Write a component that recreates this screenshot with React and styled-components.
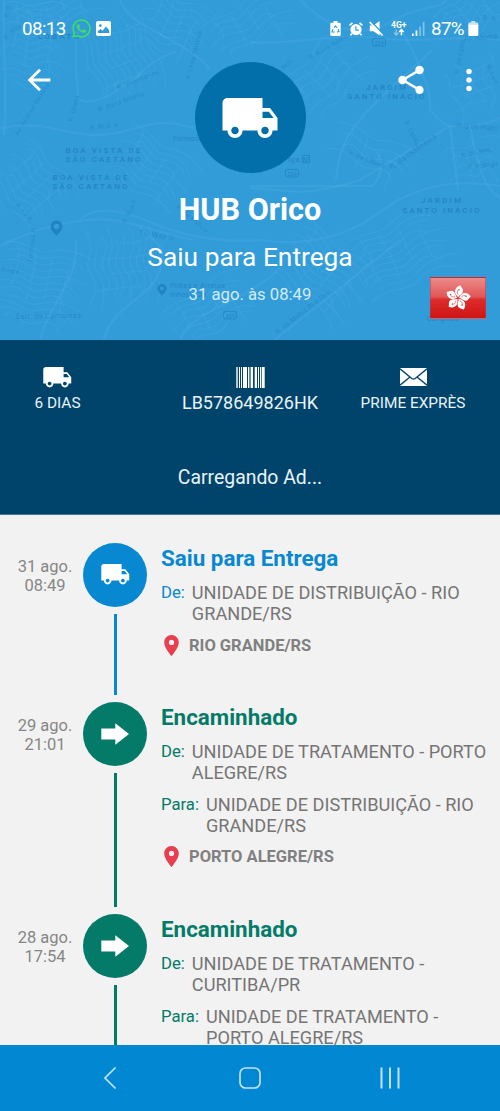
import React from "react";
import styled, { createGlobalStyle } from "styled-components";
import {
	MdArrowBack,
	MdShare,
	MdMoreVert,
	MdLocalShipping,
	MdPlace,
} from "react-icons/md";
import { FaWhatsapp } from "react-icons/fa";

const GlobalStyle = createGlobalStyle`
	* {
		box-sizing: border-box;
	}

	body {
		margin: 0;
		font-family: Roboto, "Liberation Sans", sans-serif;
	}

	svg {
		display: block;
		flex-shrink: 0;
	}
`;

const Screen = styled.div`
	width: 500px;
	height: 1111px;
	display: flex;
	flex-direction: column;
	overflow: hidden;
	background: #f2f2f2;
`;

//header

const Header = styled.header`
	position: relative;
	height: 340px;
	flex-shrink: 0;
	overflow: hidden;
	background: #329cd9;
	color: #fff;
`;

const MapLayer = styled.svg`
	position: absolute;
	top: 0;
	left: 0;
`;

const HeaderContent = styled.div`
	position: relative;
	display: flex;
	flex-direction: column;
`;

const StatusBar = styled.div`
	display: flex;
	justify-content: space-between;
	height: 57px;
	padding: 0 21px 0 22px;
`;

const StatusGroup = styled.div`
	display: flex;
	align-items: center;
	height: 57px;
`;

const StatusText = styled.span`
	font-size: 18.8px;
	line-height: 22px;
	letter-spacing: -0.6px;
	white-space: nowrap;
`;

const StatusIcon = styled.span`
	margin-left: ${({ $gap }) => $gap};
`;

const Toolbar = styled.div`
	display: grid;
	grid-template-columns: 1fr 111px 1fr;
	height: 111px;
	margin-top: 5px;
`;

const ToolbarGroup = styled.div`
	display: flex;
	gap: 24px;
	height: 35px;
	align-items: center;
	padding: 0 14px 0 22px;
	justify-content: ${({ $end }) => ($end ? "flex-end" : "flex-start")};
`;

const HeroCircle = styled.div`
	width: 111px;
	height: 111px;
	border-radius: 50%;
	background: #026faa;
	display: flex;
	align-items: center;
	justify-content: center;
`;

const HeroText = styled.div`
	display: flex;
	flex-direction: column;
	align-items: center;
	padding-top: 18px;
`;

const HeroTitle = styled.h1`
	margin: 0;
	font-size: 30.6px;
	font-weight: 700;
	line-height: 37px;
`;

const HeroStatus = styled.div`
	margin-top: 13px;
	font-size: 26.3px;
	line-height: 32px;
`;

const HeroDate = styled.div`
	margin-top: 12px;
	font-size: 16.7px;
	line-height: 20px;
	color: #d3ebf8;
`;

const Flag = styled.div`
	position: absolute;
	right: 14px;
	bottom: 21px;
	width: 56px;
	height: 42px;
	border: 1px solid rgba(190, 60, 80, 0.5);
	background: linear-gradient(#ec8b8b 0%, #e15656 47%, #dc2c2c 54%, #d01414 100%);
	display: flex;
	align-items: center;
	justify-content: center;
`;

//info panel

const InfoPanel = styled.section`
	height: 175px;
	flex-shrink: 0;
	background: #00446b;
	border-bottom: 1px solid #4b7591;
	color: #e9f3f9;
	display: flex;
	flex-direction: column;
	align-items: center;
`;

const InfoRow = styled.div`
	width: 100%;
	display: grid;
	grid-template-columns: 174px 152px 174px;
	padding-top: 22px;
`;

const InfoItem = styled.div`
	display: flex;
	flex-direction: column;
	align-items: center;
	padding-right: ${({ $inset }) => $inset || "0"};
	font-size: ${({ $size }) => $size || "15.4px"};
	line-height: 22px;
	white-space: nowrap;
`;

const InfoIcon = styled.span`
	height: 30px;
	display: flex;
	align-items: center;
	color: #fff;
`;

const AdText = styled.div`
	margin-top: 52px;
	font-size: 19.4px;
	line-height: 24px;
`;

//timeline

const Timeline = styled.main`
	flex: 1;
	min-height: 0;
	overflow: hidden;
	padding-top: 27.5px;
`;

const Event = styled.article`
	display: grid;
	grid-template-columns: 83px 64px 1fr;
	height: ${({ $height }) => $height};
`;

const EventDate = styled.div`
	padding: 14px 0 0 7px;
	font-size: 16.5px;
	line-height: 19.3px;
	text-align: center;
	color: #868686;
`;

const Rail = styled.div`
	display: flex;
	flex-direction: column;
	align-items: center;
	padding-bottom: 7px;
`;

const RailCircle = styled.div`
	width: 64px;
	height: 64px;
	flex-shrink: 0;
	border-radius: 50%;
	background: ${({ $color }) => $color};
	color: #fff;
	display: flex;
	align-items: center;
	justify-content: center;
`;

const RailLine = styled.div`
	flex: 1;
	width: 3px;
	margin-top: 7px;
	background: ${({ $color }) => $color};
`;

const EventBody = styled.div`
	padding: 1px 10px 0 14px;
`;

const EventTitle = styled.h2`
	margin: 0 0 10.5px;
	font-size: 22.4px;
	font-weight: 700;
	line-height: 28px;
	color: ${({ $color }) => $color};
`;

const Route = styled.div`
	display: flex;
	gap: 7px;
	margin-bottom: 10px;
	font-size: 18.15px;
	line-height: 21.3px;
	color: #757575;
`;

const RouteLabel = styled.span`
	font-size: 16.7px;
	color: ${({ $color }) => $color};
`;

const Place = styled.div`
	display: flex;
	align-items: center;
	gap: 5px;
	height: 21px;
	margin-left: -2px;
	font-size: 16.5px;
	font-weight: 700;
	color: #808080;
`;

//system navigation

const NavBar = styled.nav`
	height: 66px;
	flex-shrink: 0;
	background: #0288d3;
	display: grid;
	grid-template-columns: repeat(3, 140px);
	justify-content: center;
	align-items: center;
	justify-items: center;
`;

const BLUE = "#0788d1";
const GREEN = "#047b68";

const events = [
	{
		date: "31 ago.",
		time: "08:49",
		title: "Saiu para Entrega",
		color: BLUE,
		icon: "truck",
		height: "159px",
		routes: [["De:", "UNIDADE DE DISTRIBUIÇÃO - RIO GRANDE/RS"]],
		place: "RIO GRANDE/RS",
	},
	{
		date: "29 ago.",
		time: "21:01",
		title: "Encaminhado",
		color: GREEN,
		icon: "arrow",
		height: "212px",
		routes: [
			["De:", "UNIDADE DE TRATAMENTO - PORTO ALEGRE/RS"],
			["Para:", "UNIDADE DE DISTRIBUIÇÃO - RIO GRANDE/RS"],
		],
		place: "PORTO ALEGRE/RS",
	},
	{
		date: "28 ago.",
		time: "17:54",
		title: "Encaminhado",
		color: GREEN,
		icon: "arrow",
		height: "212px",
		routes: [
			["De:", "UNIDADE DE TRATAMENTO - CURITIBA/PR"],
			["Para:", "UNIDADE DE TRATAMENTO - PORTO ALEGRE/RS"],
		],
	},
];

const mainRoads = [
	"M0 128C50 118 70 140 110 134S150 116 194 128",
	"M4 0C2 40 8 90 4 136",
	"M78 30C74 50 76 70 78 98Q84 106 108 96L136 78Q150 60 176 52",
	"M500 40C450 34 420 44 380 38S290 46 250 42",
	"M395 20C420 60 432 92 430 110Q444 126 450 126L458 190",
	"M450 126L360 180Q330 190 300 192L250 188",
	"M450 126Q480 128 500 118",
	"M336 180C340 140 350 130 378 100L432 50",
	"M0 246C30 232 50 224 88 220S150 232 194 240",
	"M80 220Q100 200 150 222T260 240Q330 250 380 212T500 186",
	"M250 186H372Q388 170 376 150",
	"M40 340C50 300 80 280 76 240",
	"M104 340C110 306 150 300 160 270S146 240 140 226",
	"M180 340C190 310 250 300 280 268",
	"M274 340Q300 320 330 296T400 240",
	"M470 126C478 170 486 190 500 198",
	"M300 0C330 30 360 40 390 22S440 10 446 0",
	"M120 0C130 30 190 40 210 70",
];

// blocks of winding side streets: centre, size, rotation, number of streets
const districts = [
	{ x: 118, y: 60, w: 84, h: 70, a: 70, n: 11 },
	{ x: 34, y: 50, w: 64, h: 90, a: 4, n: 12 },
	{ x: 60, y: 14, w: 90, h: 34, a: -20, n: 5 },
	{ x: 172, y: 30, w: 70, h: 60, a: 24, n: 8 },
	{ x: 250, y: 26, w: 90, h: 44, a: -30, n: 6 },
	{ x: 474, y: 16, w: 66, h: 46, a: -38, n: 6 },
	{ x: 330, y: 80, w: 90, h: 60, a: -44, n: 6 },
	{ x: 150, y: 172, w: 84, h: 60, a: 34, n: 9 },
	{ x: 28, y: 190, w: 76, h: 70, a: 48, n: 9 },
	{ x: 40, y: 290, w: 90, h: 80, a: 12, n: 12 },
	{ x: 118, y: 268, w: 80, h: 70, a: 84, n: 10 },
	{ x: 214, y: 312, w: 90, h: 50, a: -30, n: 7 },
	{ x: 320, y: 276, w: 100, h: 70, a: 40, n: 10 },
	{ x: 404, y: 256, w: 100, h: 70, a: -26, n: 10 },
	{ x: 470, y: 90, w: 60, h: 60, a: 70, n: 5 },
	{ x: 372, y: 158, w: 90, h: 40, a: 24, n: 4 },
	{ x: 476, y: 164, w: 60, h: 40, a: -16, n: 4 },
];

const streetNames = [
	{ x: 18, y: 136, a: -58, t: "Av. Afrânio Peixoto" },
	{ x: 118, y: 90, a: -22, t: "R. Voluntários" },
	{ x: 99, y: 112, a: -20, t: "R. Dona Amélia" },
	{ x: 90, y: 130, a: -6, t: "R. Rod. A." },
	{ x: 72, y: 122, a: -74, t: "R. Direta" },
	{ x: 190, y: 80, a: -76, t: "R. Lima Teixeira" },
	{ x: 6, y: 40, a: -42, t: "R. Rua" },
	{ x: 8, y: 18, a: -70, t: "R. S." },
	{ x: 15, y: 206, a: 45, t: "R. Luiz" },
	{ x: 126, y: 224, a: -64, t: "R. Rua F." },
	{ x: 139, y: 235, a: 8, t: "Tv. Way G.", big: 1 },
	{ x: 176, y: 208, a: 40, t: "R. da Bolívia" },
	{ x: 32, y: 262, a: -84, t: "Formosa R." },
	{ x: 1, y: 272, a: 4, t: "Pirajá" },
	{ x: 16, y: 319, a: -1, t: "Estr. de Campinas", big: 1 },
	{ x: 278, y: 334, a: -38, t: "R. da Matriz Boa Esp." },
	{ x: 404, y: 122, a: 64, t: "R. Celika" },
	{ x: 392, y: 170, a: -36, t: "R. da Indonésia", big: 1 },
	{ x: 456, y: 128, a: 4, t: "Rua do Prato", big: 1, w: 42 },
	{ x: 462, y: 158, a: -14, t: "R. da Reg.", w: 32 },
	{ x: 468, y: 169, a: -6, t: "R. Rodrigo", w: 30 },
	{ x: 348, y: 154, a: 22, t: "R. da Líbano" },
	{ x: 464, y: 41, a: -4, t: "Av. Alioma", w: 34, big: 1 },
	{ x: 459, y: 74, a: -80, t: "R. do Egito" },
	{ x: 486, y: 66, a: 62, t: "R. Luís" },
	{ x: 310, y: 60, a: -30, t: "R. Nova Roma" },
	{ x: 284, y: 70, a: -46, t: "Nilo" },
	{ x: 483, y: 20, a: 0, t: "R. d" },
];

const street = (w, y, i) =>
	`M${-w / 2 + (i % 3) * 7} ${y}C${-w / 4} ${y - 7 - (i % 4) * 2} ${-w / 8} ${y + 6} 0 ${
		y + 1
	}S${w / 4} ${y - 8} ${w / 2 - (i % 4) * 6} ${y + (i % 2) * 5}`;

const Map = () => (
	<MapLayer width="500" height="340" viewBox="0 0 500 340">
		<g fill="none" stroke="#58b4e8" strokeOpacity="0.24">
			{mainRoads.map((d) => (
				<path key={d} d={d} strokeWidth="2.2" />
			))}
			{districts.map(({ x, y, w, h, a, n }) => (
				<g key={`${x}-${y}`} transform={`translate(${x} ${y}) rotate(${a})`} strokeWidth="1">
					{Array.from({ length: n }, (_, i) => (
						<path key={i} d={street(w, -h / 2 + (h * i) / n, i)} />
					))}
					{Array.from({ length: 4 }, (_, i) => (
						<path
							key={i}
							d={`M${-w / 3 + (i * w) / 5} ${-h / 2 + i * 4}q${6 - i * 3} ${h / 4} 0 ${
								h / 2 + (i % 2) * 12
							}`}
						/>
					))}
				</g>
			))}
		</g>
		<g fill="#0b5f9e" fillOpacity="0.32" fontFamily="Roboto">
			{streetNames.map(({ x, y, a, t, big, w }) => (
				<text
					key={t}
					transform={`translate(${x} ${y}) rotate(${a})`}
					fontSize={big ? 7.5 : 6.5}
					letterSpacing="0.3"
					textLength={w}
				>
					{t}
				</text>
			))}
		</g>
		<g
			fill="#0b5f9e"
			fillOpacity="0.42"
			fontFamily="Roboto"
			fontSize="8"
			fontWeight="500"
			lengthAdjust="spacing"
		>
			<text x="38" y="39" textLength="41">LOBATO</text>
			<text x="65.500" y="152.500" textLength="75">BOA VISTA DE</text>
			<text x="65.500" y="161.500" textLength="75">SÃO CAETANO</text>
			<text x="52.500" y="180" textLength="75">BOA VISTA DE</text>
			<text x="52.500" y="189" textLength="75">SÃO CAETANO</text>
			<text x="366" y="89.500" textLength="40">JARDIM</text>
			<text x="347.500" y="98.500" textLength="77">SANTO INÁCIO</text>
			<text x="421" y="203" textLength="40">JARDIM</text>
			<text x="402.500" y="212.500" textLength="77">SANTO INÁCIO</text>
		</g>
		<g fill="#0b5f9e" fillOpacity="0.4" fontFamily="Roboto" fontSize="7">
			<text x="173" y="141" fontSize="7.500">Formosa</text>
			<text x="170" y="288" textLength="55">Pilões e Arreios</text>
			<text x="170" y="297">linhos e Cia</text>
			<text x="288" y="162">nça</text>
			<text x="303" y="161.500" fontSize="6.500">M</text>
			<text x="427" y="321">Campinas</text>
			<text x="374.500" y="44.500" fontSize="5.500">324</text>
			<text x="287.500" y="175.500" fontSize="5.500">324</text>
			<text x="225.500" y="317.500" fontSize="5.500">324</text>
			<path d="M56.500 220.500a6 6 0 0 0-6 6c0 4 6 9 6 9s6-5 6-9a6 6 0 0 0-6-6zm0 3.400a2.700 2.700 0 1 1 0 5.400 2.700 2.700 0 0 1 0-5.400z" fillRule="evenodd" />
			<path d="M162 284a4.600 4.600 0 0 0-4.600 4.600c0 3 4.600 7 4.600 7s4.600-4 4.600-7A4.600 4.600 0 0 0 162 284zm0 2.500a2 2 0 1 1 0 4 2 2 0 0 1 0-4z" fillRule="evenodd" />
		</g>
		<g fill="none" stroke="#0b5f9e" strokeOpacity="0.3">
			<rect x="372.500" y="38.500" width="13" height="7.500" rx="2" />
			<rect x="302.500" y="155.500" width="7" height="7" />
			<rect x="285.500" y="169.500" width="13" height="7.500" rx="2" />
			<rect x="223.500" y="311.500" width="13" height="7.500" rx="2" />
		</g>
	</MapLayer>
);

const ImageIcon = () => (
	<svg width="15" height="15" viewBox="0 0 15 15">
		<rect width="15" height="15" rx="1.800" fill="#fff" />
		<circle cx="4.300" cy="4.600" r="1.400" fill="#329cd9" />
		<path d="M1.800 12V10l2.800-2 2 1.700L10 5.500l3.200 3.800V12z" fill="#329cd9" />
	</svg>
);

const RecycleBatteryIcon = () => (
	<svg width="11" height="15" viewBox="0 0 11 15">
		<path d="M3.500 0h4v1.700H9.500A1.200 1.200 0 0 1 10.700 3v10.700A1.200 1.200 0 0 1 9.500 15h-8A1.200 1.200 0 0 1 .3 13.700V3a1.200 1.200 0 0 1 1.200-1.300h2z" fill="#fff" />
		<path d="M4 6.800L5.500 4.900 7 6.800M8 8l1 2.500-2 .6M4.600 11.100L2 10.700 3 8.200" fill="none" stroke="#329cd9" strokeWidth="1.100" />
	</svg>
);

const AlarmIcon = () => (
	<svg width="14" height="14" viewBox="0 0 14 14">
		<circle cx="7" cy="7.600" r="5.600" fill="#fff" />
		<path d="M.6 3.400L3.500.8M13.400 3.400L10.500.8M2.800 11.600L1.500 13.200M11.200 11.600l1.300 1.600" stroke="#fff" strokeWidth="1.700" />
		<path d="M6.900 4.300v3.800h2.900" fill="none" stroke="#329cd9" strokeWidth="1.200" />
	</svg>
);

const MuteIcon = () => (
	<svg width="15" height="15" viewBox="0 0 15 15">
		<path d="M.8 4.600h3.700L10.600 0v14.500L4.500 10.200H.8z" fill="#fff" />
		<path d="M1.900.2l13 13.500" stroke="#329cd9" strokeWidth="1.300" />
		<path d="M.6 1l13 13.500" stroke="#fff" strokeWidth="1.600" />
	</svg>
);

const NetworkIcon = () => (
	<svg width="16" height="15" viewBox="0 0 16 15">
		<text x="0" y="7" fill="#fff" fontFamily="Roboto" fontSize="8.800" fontWeight="700" textLength="15.500" lengthAdjust="spacingAndGlyphs">
			4G+
		</text>
		<path d="M5.200 8.300v5.400M2.900 11.600l2.300 2.500 2.300-2.500" fill="none" stroke="#8fcaed" strokeWidth="1.200" />
		<path d="M10.400 14.300V9M8.100 11.100l2.300-2.400 2.300 2.400" fill="none" stroke="#fff" strokeWidth="1.500" />
	</svg>
);

const SignalIcon = () => (
	<svg width="13" height="14" viewBox="0 0 13 14">
		<rect x="0" y="11.500" width="1.700" height="2.500" fill="#fff" />
		<rect x="3.600" y="8.500" width="1.700" height="5.500" fill="#fff" />
		<rect x="7.200" y="4.500" width="1.700" height="9.500" fill="#7fc3ea" />
		<rect x="10.800" y="0" width="1.700" height="14" fill="#7fc3ea" />
	</svg>
);

const BatteryIcon = () => (
	<svg width="11" height="15" viewBox="0 0 11 15">
		<path d="M3.200 0h4v1.500H9A1.200 1.200 0 0 1 10.300 2.700V5H.3V2.700A1.200 1.200 0 0 1 1.500 1.500h1.700z" fill="#c4e3f6" />
		<path d="M.3 3.800h10v10A1.200 1.200 0 0 1 9 15H1.500A1.200 1.200 0 0 1 .3 13.800z" fill="#fff" />
	</svg>
);

const BarcodeIcon = () => (
	<svg width="29" height="21" viewBox="0 0 29 21" fill="#fff">
		<rect x="0.300" width="1.400" height="21" />
		<rect x="3" width="1" height="21" />
		<rect x="5" width="1" height="21" />
		<rect x="7" width="4" height="21" />
		<rect x="12" width="1.400" height="21" />
		<rect x="14.600" width="2.400" height="21" />
		<rect x="18.700" width="2.300" height="21" />
		<rect x="22" width="1" height="21" />
		<rect x="24" width="1" height="21" />
		<rect x="25.700" width="3" height="21" />
	</svg>
);

const MailIcon = () => (
	<svg width="27" height="18" viewBox="0 0 27 18">
		<rect width="27" height="18" fill="#fff" />
		<path d="M0 .8l11.800 9.700q1.700 1.200 3.400 0L27 .8M0 17.200l10-8.200M27 17.200L17 9" fill="none" stroke="#00446b" strokeWidth="1.400" />
	</svg>
);

const ArrowIcon = () => (
	<svg width="28" height="22" viewBox="0 0 28 22">
		<path d="M.3 5.500h14V.2L28 11 14.300 21.700v-5.200H.3z" fill="#fff" />
	</svg>
);

const Bauhinia = () => (
	<svg width="28" height="28" viewBox="-13 -13 26 26">
		{[8, 80, 152, 224, 296].map((a) => (
			<g key={a} transform={`rotate(${a})`}>
				<path d="M0-1C-5-4-4.800-9.400.6-12 .8-10.400 4.400-9.400 3.600-6 2.800-3.400.8-3.200 0-1z" fill="#fff" />
				<path d="M-.2-3C-1.800-5-1.400-6.600-.3-8" fill="none" stroke="#dc3535" strokeWidth=".5" />
				<circle cx="-.1" cy="-7.600" r=".6" fill="#dc3535" />
			</g>
		))}
	</svg>
);

const TimelineEvent = ({ event }) => (
	<Event $height={event.height}>
		<EventDate>
			{event.date}
			<br />
			{event.time}
		</EventDate>
		<Rail>
			<RailCircle $color={event.color}>
				{event.icon === "truck" ? <MdLocalShipping size={30.5} /> : <ArrowIcon />}
			</RailCircle>
			<RailLine $color={event.color} />
		</Rail>
		<EventBody>
			<EventTitle $color={event.color}>{event.title}</EventTitle>
			{event.routes.map(([label, unit]) => (
				<Route key={label}>
					<RouteLabel $color={event.color}>{label}</RouteLabel>
					<span>{unit}</span>
				</Route>
			))}
			{event.place && (
				<Place>
					<MdPlace size={25} color="#e83e50" />
					{event.place}
				</Place>
			)}
		</EventBody>
	</Event>
);

function App() {
	return (
		<>
			<GlobalStyle />
			<Screen>
				<Header>
					<Map />
					<HeaderContent>
						<StatusBar>
							<StatusGroup>
								<StatusText>08:13</StatusText>
								<StatusIcon $gap="5px">
									<FaWhatsapp size={21} color="#3fe05a" />
								</StatusIcon>
								<StatusIcon $gap="4px">
									<ImageIcon />
								</StatusIcon>
							</StatusGroup>
							<StatusGroup>
								<RecycleBatteryIcon />
								<StatusIcon $gap="8px">
									<AlarmIcon />
								</StatusIcon>
								<StatusIcon $gap="6px">
									<MuteIcon />
								</StatusIcon>
								<StatusIcon $gap="7px">
									<NetworkIcon />
								</StatusIcon>
								<StatusIcon $gap="5px">
									<SignalIcon />
								</StatusIcon>
								<StatusIcon $gap="6px">
									<StatusText>87%</StatusText>
								</StatusIcon>
								<StatusIcon $gap="4px">
									<BatteryIcon />
								</StatusIcon>
							</StatusGroup>
						</StatusBar>
						<Toolbar>
							<ToolbarGroup>
								<MdArrowBack size={34} />
							</ToolbarGroup>
							<HeroCircle>
								<MdLocalShipping size={60} />
							</HeroCircle>
							<ToolbarGroup $end>
								<MdShare size={34} />
								<MdMoreVert size={34} />
							</ToolbarGroup>
						</Toolbar>
						<HeroText>
							<HeroTitle>HUB Orico</HeroTitle>
							<HeroStatus>Saiu para Entrega</HeroStatus>
							<HeroDate>31 ago. às 08:49</HeroDate>
						</HeroText>
					</HeaderContent>
					<Flag>
						<Bauhinia />
					</Flag>
				</Header>
				<InfoPanel>
					<InfoRow>
						<InfoItem $inset="59px">
							<InfoIcon>
								<MdLocalShipping size={30.5} />
							</InfoIcon>
							6 DIAS
						</InfoItem>
						<InfoItem $size="18px">
							<InfoIcon>
								<BarcodeIcon />
							</InfoIcon>
							LB578649826HK
						</InfoItem>
						<InfoItem>
							<InfoIcon>
								<MailIcon />
							</InfoIcon>
							PRIME EXPRÈS
						</InfoItem>
					</InfoRow>
					<AdText>Carregando Ad...</AdText>
				</InfoPanel>
				<Timeline>
					{events.map((event) => (
						<TimelineEvent key={event.date} event={event} />
					))}
				</Timeline>
				<NavBar>
					<svg width="14" height="24" viewBox="0 0 14 24" fill="none" stroke="#c4e2f5" strokeWidth="1.700">
						<path d="M12.500 1.500L2 12l10.500 10.500" />
					</svg>
					<svg width="22" height="22" viewBox="0 0 22 22" fill="none" stroke="#c4e2f5" strokeWidth="1.700">
						<rect x="1" y="1" width="20" height="20" rx="5.500" />
					</svg>
					<svg width="20" height="22" viewBox="0 0 20 22" fill="#c4e2f5">
						<rect x="0.500" y="0.500" width="2" height="21" />
						<rect x="9" y="0.500" width="2" height="21" />
						<rect x="17.500" y="0.500" width="2" height="21" />
					</svg>
				</NavBar>
			</Screen>
		</>
	);
}

export default App;
